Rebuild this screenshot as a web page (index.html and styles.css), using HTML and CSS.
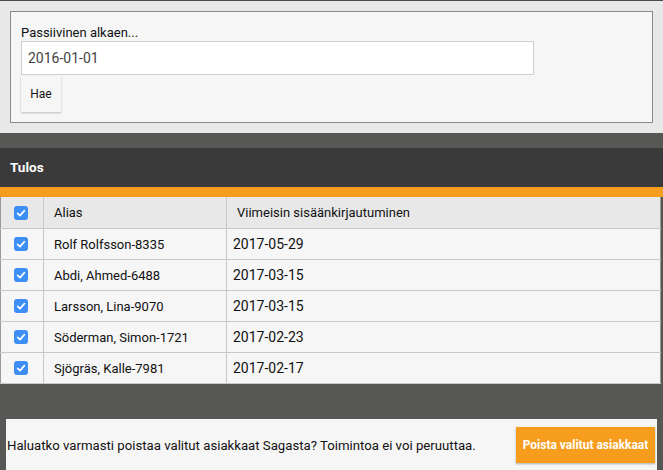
FILE: index.html
```html
<!DOCTYPE html>
<html lang="fi">
<head>
<meta charset="utf-8">
<title>Passiiviset asiakkaat</title>
<link rel="stylesheet" href="styles.css">
</head>
<body>
<section class="search">
  <div class="panel">
    <label class="label" for="since">Passiivinen alkaen...</label>
    <input class="date-input" id="since" type="text" value="2016-01-01">
    <button class="btn-search" type="button">Hae</button>
  </div>
</section>
<section class="results">
  <div class="results-head">Tulos</div>
  <table class="grid">
    <colgroup>
      <col class="col-check">
      <col class="col-alias">
      <col class="col-date">
    </colgroup>
    <thead>
      <tr>
        <th class="c-check"><span class="cb"><svg viewBox="0 0 14 14"><path d="M3.6 7.3 L6 9.6 L10.4 4.6" /></svg></span></th>
        <th class="c-alias">Alias</th>
        <th class="c-date">Viimeisin sisäänkirjautuminen</th>
      </tr>
    </thead>
    <tbody>
      <tr><td class="c-check"><span class="cb"><svg viewBox="0 0 14 14"><path d="M3.6 7.3 L6 9.6 L10.4 4.6" /></svg></span></td><td class="c-alias">Rolf Rolfsson-8335</td><td class="c-date">2017-05-29</td></tr>
      <tr><td class="c-check"><span class="cb"><svg viewBox="0 0 14 14"><path d="M3.6 7.3 L6 9.6 L10.4 4.6" /></svg></span></td><td class="c-alias">Abdi, Ahmed-6488</td><td class="c-date">2017-03-15</td></tr>
      <tr><td class="c-check"><span class="cb"><svg viewBox="0 0 14 14"><path d="M3.6 7.3 L6 9.6 L10.4 4.6" /></svg></span></td><td class="c-alias">Larsson, Lina-9070</td><td class="c-date">2017-03-15</td></tr>
      <tr><td class="c-check"><span class="cb"><svg viewBox="0 0 14 14"><path d="M3.6 7.3 L6 9.6 L10.4 4.6" /></svg></span></td><td class="c-alias">Söderman, Simon-1721</td><td class="c-date">2017-02-23</td></tr>
      <tr><td class="c-check"><span class="cb"><svg viewBox="0 0 14 14"><path d="M3.6 7.3 L6 9.6 L10.4 4.6" /></svg></span></td><td class="c-alias">Sjögräs, Kalle-7981</td><td class="c-date">2017-02-17</td></tr>
    </tbody>
  </table>
</section>
<div class="confirm">
  <span class="confirm-text">Haluatko varmasti poistaa valitut asiakkaat Sagasta? Toimintoa ei voi peruuttaa.</span>
  <button class="btn-delete" type="button">Poista valitut asiakkaat</button>
</div>
</body>
</html>
```
FILE: styles.css
```css
html, body {
  margin: 0;
  padding: 0;
}
body {
  background: #575755;
  font-family: Roboto, "Liberation Sans", sans-serif;
  color: #111;
  width: 663px;
  height: 470px;
  overflow: hidden;
}
.search {
  background: #e8e8e8;
  border-top: 1px solid #4a4a4a;
  padding: 10px 10px 10px 10px;
}
.panel {
  background: #f6f6f6;
  border: 1px solid #8a8a8a;
  padding: 12px 10px 10px 10px;
  display: flex;
  flex-direction: column;
  align-items: flex-start;
}
.label {
  font-size: 13px;
  line-height: 17px;
  color: #111;
}
.date-input {
  box-sizing: border-box;
  width: 513px;
  height: 34px;
  margin: 0;
  border: 1px solid #cfcfcf;
  background: #fff;
  padding: 0 6px;
  font-family: Roboto, "Liberation Sans", sans-serif;
  font-size: 14px;
  color: #444;
  outline: none;
}
.btn-search {
  margin-top: 1px;
  width: 40px;
  height: 36px;
  border: none;
  background: #f6f6f6;
  box-shadow: 0 1px 2px rgba(0,0,0,0.25);
  font-family: Roboto, "Liberation Sans", sans-serif;
  font-size: 12px;
  color: #111;
  padding: 0;
}
.results {
  padding-top: 15px;
}
.results-head {
  background: #3a3a3a;
  color: #fff;
  font-weight: bold;
  font-size: 13.5px;
  height: 39px;
  line-height: 39px;
  padding-left: 10px;
  border-bottom: 10px solid #f79d1d;
}
.grid {
  width: 661px;
  table-layout: fixed;
  border-collapse: collapse;
  border-left: 1px solid #999;
  border-right: 1px solid #999;
  border-bottom: 1px solid #c8c8c8;
  font-size: 13px;
}
.col-check { width: 43px; }
.col-alias { width: 183px; }
.grid th, .grid td {
  border: 1px solid #c8c8c8;
  text-align: left;
  padding: 0;
  height: 30px;
  font-weight: normal;
  color: #111;
}
.grid th {
  background: #e8e8e8;
  height: 31px;
  border-top: none;
}
.grid td {
  background: #f6f6f6;
}
.grid .c-check {
  padding-left: 13px;
  border-left: none;
}
.grid .c-alias {
  padding-left: 10px;
}
.grid th.c-date {
  padding-left: 10px;
  border-right: none;
}
.grid td.c-date {
  padding-left: 6px;
  border-right: none;
  font-size: 14px;
}
.cb {
  display: block;
  width: 14px;
  height: 14px;
  border-radius: 3px;
  background: #3d8ef5;
}
.cb svg {
  display: block;
  width: 14px;
  height: 14px;
}
.cb path {
  fill: none;
  stroke: #fff;
  stroke-width: 1.6;
  stroke-linecap: round;
  stroke-linejoin: round;
}
.confirm {
  margin: 35px 6px 0 6px;
  background: #f6f6f6;
  height: 51px;
  border-bottom: 1px solid #222;
  display: flex;
  align-items: center;
  justify-content: space-between;
  padding: 0 2px 0 1px;
}
.confirm-text {
  font-size: 13.2px;
  color: #111;
  margin-top: 2px;
}
.btn-delete {
  width: 139px;
  height: 36px;
  border: none;
  background: #f79d1d;
  color: #fff;
  font-weight: bold;
  font-family: Roboto, "Liberation Sans", sans-serif;
  font-size: 12px;
  box-shadow: 0 1px 2px rgba(0,0,0,0.3);
  padding: 0;
  margin-top: 1px;
}
```
